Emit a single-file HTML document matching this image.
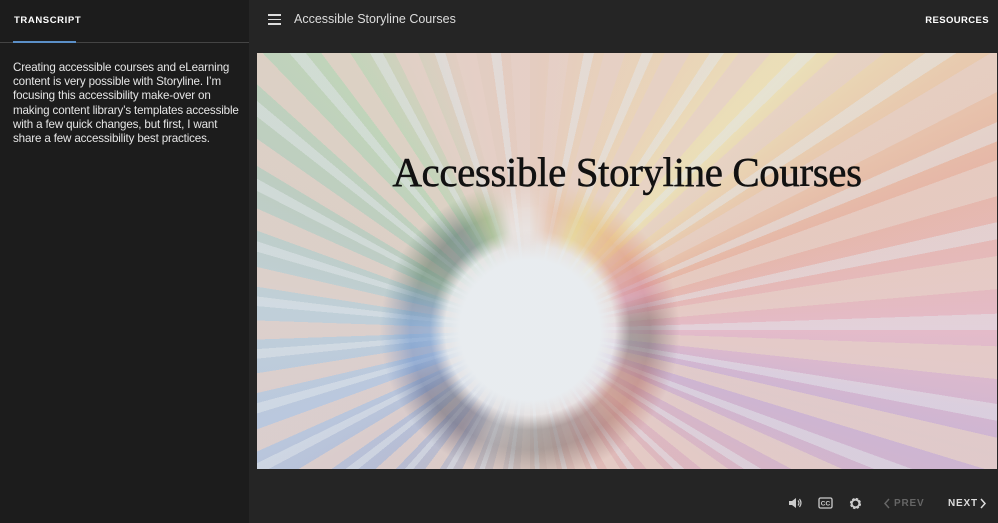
<!DOCTYPE html>
<html><head><meta charset="utf-8"><style>
*{margin:0;padding:0;box-sizing:border-box}
body{width:998px;height:523px;background:#232323;font-family:"Liberation Sans",sans-serif;position:relative;overflow:hidden}
#side{position:absolute;left:0;top:0;width:249px;height:523px;background:#1c1c1c}
#tab{position:absolute;left:14px;top:15px;color:#fff;font-size:9.5px;font-weight:bold;letter-spacing:.6px}
#line{position:absolute;left:0;top:42px;width:249px;height:1px;background:#444}
#uline{position:absolute;left:13px;top:41px;width:63px;height:2px;background:#5b8fc7}
#txt{position:absolute;left:13px;top:61px;width:230px;color:#e6e6e6;font-size:11.6px;line-height:14.2px;letter-spacing:-.15px}
#main{position:absolute;left:249px;top:0;right:0;height:523px;background:#252525}
#ham{position:absolute;left:268px;top:14px;width:13px}
#ham i{display:block;height:1.5px;background:#ddd;margin-bottom:3px}
#ttl{position:absolute;left:294px;top:12px;color:#ddd;font-size:12.5px}
#res{position:absolute;right:9px;top:15px;color:#fff;font-size:9.5px;font-weight:bold;letter-spacing:.4px}
#slide{position:absolute;left:257px;top:53px;width:740px;height:416px;overflow:hidden;
background:
linear-gradient(rgba(236,238,240,.35),rgba(236,238,240,.35)),
radial-gradient(circle at 273px 277px,#e6ebef 0,#e6ebef 70px,rgba(230,236,241,.5) 95px,rgba(230,236,241,0) 125px),
repeating-conic-gradient(from 0deg at 273px 277px,rgba(225,190,175,0) 0deg 4deg,rgba(226,192,178,.75) 4deg 8deg,rgba(225,190,175,0) 8deg 11deg),
repeating-conic-gradient(from 2deg at 273px 277px,rgba(220,226,232,0) 0deg 9deg,rgba(220,226,232,.5) 9deg 11deg),
conic-gradient(from 0deg at 273px 277px,#e0b9a6 0deg,#e8c79a 30deg,#ead89a 45deg,#e29a80 70deg,#e0a0b4 90deg,#bb96c4 105deg,#d49aa8 130deg,#d99e98 150deg,#d6b2a4 175deg,#b0a1a8 200deg,#9aa2c4 225deg,#9fb3d4 250deg,#a9bfcc 275deg,#a4bba8 300deg,#a9c79c 325deg,#dcbcaa 345deg,#e0b9a6 360deg);}
#tips{position:absolute;left:0;top:0;width:740px;height:416px;opacity:.42;
background:conic-gradient(from 0deg at 273px 277px,#eee 0deg,#e8b090 12deg,#e6d060 25deg,#e8a050 40deg,#d87060 55deg,#c86890 72deg,#604848 85deg,#505050 97deg,#a05048 112deg,#b06048 130deg,#785050 150deg,#605858 170deg,#707070 185deg,#8a8a90 200deg,#3a3a58 215deg,#404050 228deg,#384878 240deg,#4a78c0 255deg,#4a80c8 270deg,#3a6898 283deg,#3a6a48 297deg,#304a48 312deg,#2a5050 325deg,#68a050 338deg,#eee 350deg);
-webkit-mask:radial-gradient(circle at 273px 277px,transparent 0,transparent 85px,#000 100px,#000 120px,transparent 150px);
mask:radial-gradient(circle at 273px 277px,transparent 0,transparent 85px,#000 100px,#000 120px,transparent 150px)}
#slide h1{position:absolute;left:0;width:740px;top:95px;text-align:center;font-family:"Liberation Serif",serif;font-weight:normal;font-size:41px;color:#111;letter-spacing:-.4px;-webkit-text-stroke:.5px #111}
.ic{position:absolute;top:497px;color:#ccc}
#prev{position:absolute;top:498px;color:#666;font-size:10px;font-weight:bold;letter-spacing:.8px}
#next{position:absolute;left:948px;top:498px;color:#ddd;font-size:10px;font-weight:bold;letter-spacing:.8px}
</style></head><body>
<div id="side">
<div id="tab">TRANSCRIPT</div>
<div id="line"></div><div id="uline"></div>
<div id="txt">Creating accessible courses and eLearning content is very possible with Storyline. I’m focusing this accessibility make-over on making content library’s templates accessible with a few quick changes, but first, I want share a few accessibility best practices.</div>
</div>
<div id="main"></div>
<div id="ham"><i></i><i></i><i></i></div>
<div id="ttl">Accessible Storyline Courses</div>
<div id="res">RESOURCES</div>
<div id="slide"><div id="tips"></div><h1>Accessible Storyline Courses</h1></div>
<svg class="ic" style="left:788px" width="14" height="12" viewBox="0 0 14 12"><path d="M1 4h3l4-3v10l-4-3H1z" fill="#ccc"/><path d="M10 3.5q2 2.5 0 5M11.5 2q3 4 0 8" stroke="#ccc" fill="none" stroke-width="1.2"/></svg>
<svg class="ic" style="left:818px" width="15" height="12" viewBox="0 0 15 12"><rect x="1" y="1" width="13" height="10" rx="1.5" fill="none" stroke="#ccc" stroke-width="1.3"/><text x="7.5" y="8.5" font-size="6.5" font-weight="bold" text-anchor="middle" fill="#ccc" font-family="Liberation Sans">CC</text></svg>
<svg class="ic" style="left:849px" width="13" height="13" viewBox="0 0 13 13"><circle cx="6.5" cy="6.5" r="4.3" fill="none" stroke="#ccc" stroke-width="2.6" stroke-dasharray="2.2 1.2"/><circle cx="6.5" cy="6.5" r="3.8" fill="none" stroke="#ccc" stroke-width="1.8"/></svg>
<svg style="position:absolute;left:883px;top:498px" width="8" height="11" viewBox="0 0 8 11"><path d="M6 1L2 5.5 6 10" stroke="#666" fill="none" stroke-width="1.5"/></svg>
<div id="prev" style="left:894px">PREV</div>
<div id="next">NEXT</div>
<svg style="position:absolute;left:979px;top:498px" width="8" height="11" viewBox="0 0 8 11"><path d="M2 1l4 4.5L2 10" stroke="#ddd" fill="none" stroke-width="1.5"/></svg>
</body></html>
